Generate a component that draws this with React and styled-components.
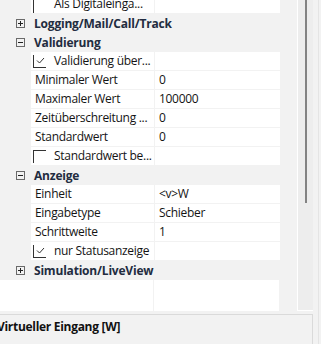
import React from 'react';
import styled, { createGlobalStyle } from 'styled-components';

const GlobalStyle = createGlobalStyle`
  html, body {
    margin: 0;
    padding: 0;
    background: #f2f2f2;
  }
  body {
    font-family: "Open Sans", "Noto Sans", sans-serif;
    font-size: 12px;
    letter-spacing: -0.3px;
    color: #000;
  }
`;

const Window = styled.div`
  width: 321px;
  height: 344px;
  overflow: hidden;
  display: flex;
  background: #f2f2f2;
`;

const Main = styled.div`
  width: 318px;
  display: flex;
  flex-direction: column;
`;

const EdgeLine = styled.div`
  width: 1px;
  background: #e4e4e4;
`;

const TopArea = styled.div`
  height: 311px;
  display: flex;
  overflow: hidden;
`;

const Grid = styled.div`
  width: 279px;
  display: flex;
  flex-direction: column;
  margin-top: -6px;
`;

const Row = styled.div`
  display: grid;
  grid-template-columns: 30px 123px 125px;
  column-gap: 1px;
  height: 18px;
  margin-top: 1px;
  flex-shrink: 0;
`;

const Cell = styled.div`
  background: #fff;
  display: flex;
  align-items: center;
  padding-left: ${(p) => (p.$check ? '2px' : '4px')};
  white-space: nowrap;
  overflow: hidden;
  line-height: 18px;
  color: #141414;
`;

const CategoryRow = styled.div`
  height: 18px;
  margin-top: 1px;
  display: flex;
  align-items: center;
  flex-shrink: 0;
  font-weight: 700;
  letter-spacing: -0.2px;
  color: #222c40;
  white-space: nowrap;
`;

const Toggle = styled.svg`
  width: 9px;
  height: 9px;
  margin-left: 16px;
  margin-right: 9px;
  flex-shrink: 0;
`;

const CheckBox = styled.div`
  width: 13px;
  height: 13px;
  box-sizing: border-box;
  border-left: 1px solid #333;
  border-top: ${(p) => (p.$checked ? 'none' : '1px solid #333')};
  border-bottom: ${(p) => (p.$checked ? '1px solid #333' : 'none')};
  margin-right: 8px;
  display: flex;
  align-items: center;
  justify-content: center;
  flex-shrink: 0;
`;

const FirstRowBox = styled.div`
  width: 13px;
  height: 18px;
  border-left: 1px solid #333;
  box-sizing: border-box;
  margin-right: 8px;
  flex-shrink: 0;
`;

const Filler = styled.div`
  display: grid;
  grid-template-columns: 153px 125px;
  column-gap: 1px;
  height: 31px;
  margin-top: 1px;
  flex-shrink: 0;
  div {
    background: #fff;
  }
`;

const ScrollArea = styled.div`
  width: 39px;
  padding-left: 18px;
  box-sizing: border-box;
  display: flex;
`;

const Track = styled.div`
  width: 16px;
  height: 311px;
  box-sizing: border-box;
  border-left: 1px solid #fff;
  border-bottom: 1px solid #fff;
  background: #ededed;
  padding-left: 7px;
`;

const Thumb = styled.div`
  width: 2px;
  height: 203px;
  background: #838383;
`;

const HelpPanel = styled.div`
  margin-top: 3px;
  width: 313px;
  flex: 1;
  box-sizing: border-box;
  border-top: 1px solid #dadada;
  border-right: 1px solid #dadada;
  padding-top: 3px;
  overflow: hidden;
`;

const HelpTitle = styled.div`
  font-weight: 700;
  margin-left: -3px;
  white-space: nowrap;
  color: #111;
`;

const PlusMinus = ({ open }) => (
  <Toggle viewBox="0 0 9 9">
    <rect x="0.5" y="0.5" width="8" height="8" fill="none" stroke="#6a6a6a" />
    <line x1="2" y1="4.5" x2="7" y2="4.5" stroke="#222" />
    {!open && <line x1="4.5" y1="2" x2="4.5" y2="7" stroke="#222" />}
  </Toggle>
);

const Check = ({ checked }) => (
  <CheckBox $checked={checked}>
    {checked && (
      <svg width="9" height="7" viewBox="0 0 9 7">
        <path d="M1 3.5 L3.5 6 L8 1" fill="none" stroke="#333" strokeWidth="1" />
      </svg>
    )}
  </CheckBox>
);

const rows = [
  { type: 'check', name: 'Als Digitaleinga...', checked: false, noBox: true },
  { type: 'cat', name: 'Logging/Mail/Call/Track', open: false },
  { type: 'cat', name: 'Validierung', open: true },
  { type: 'check', name: 'Validierung über...', checked: true },
  { type: 'prop', name: 'Minimaler Wert', value: '0' },
  { type: 'prop', name: 'Maximaler Wert', value: '100000' },
  { type: 'prop', name: 'Zeitüberschreitung ...', value: '0' },
  { type: 'prop', name: 'Standardwert', value: '0' },
  { type: 'check', name: 'Standardwert be...', checked: false },
  { type: 'cat', name: 'Anzeige', open: true },
  { type: 'prop', name: 'Einheit', value: '<v>W' },
  { type: 'prop', name: 'Eingabetype', value: 'Schieber' },
  { type: 'prop', name: 'Schrittweite', value: '1' },
  { type: 'check', name: 'nur Statusanzeige', checked: true },
  { type: 'cat', name: 'Simulation/LiveView', open: false },
];

export default function App() {
  return (
    <Window>
      <GlobalStyle />
      <Main>
        <TopArea>
          <Grid>
            {rows.map((r, i) => {
              if (r.type === 'cat') {
                return (
                  <CategoryRow key={i}>
                    <PlusMinus open={r.open} />
                    {r.name}
                  </CategoryRow>
                );
              }
              if (r.type === 'check') {
                return (
                  <Row key={i}>
                    <div />
                    <Cell $check>
                      {r.noBox ? <FirstRowBox /> : <Check checked={r.checked} />}
                      {r.name}
                    </Cell>
                    <Cell />
                  </Row>
                );
              }
              return (
                <Row key={i}>
                  <div />
                  <Cell>{r.name}</Cell>
                  <Cell>{r.value}</Cell>
                </Row>
              );
            })}
            <Filler>
              <div />
              <div />
            </Filler>
          </Grid>
          <ScrollArea>
            <Track>
              <Thumb />
            </Track>
          </ScrollArea>
        </TopArea>
        <HelpPanel>
          <HelpTitle>Virtueller Eingang [W]</HelpTitle>
        </HelpPanel>
      </Main>
      <EdgeLine />
    </Window>
  );
}
